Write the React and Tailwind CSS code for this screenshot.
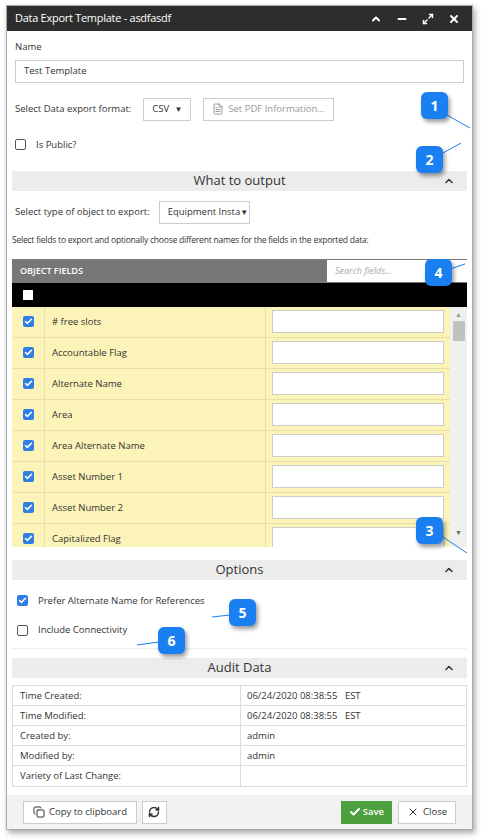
import { ChevronUp, Minus, Maximize2, X, Check, RefreshCw, Copy, FileText } from "lucide-react";

const font = { fontFamily: '"Open Sans", "Liberation Sans", sans-serif' };

const fields = ["# free slots", "Accountable Flag", "Alternate Name", "Area", "Area Alternate Name", "Asset Number 1", "Asset Number 2", "Capitalized Flag"];

const audit = [
  ["Time Created:", "06/24/2020 08:38:55   EST"],
  ["Time Modified:", "06/24/2020 08:38:55   EST"],
  ["Created by:", "admin"],
  ["Modified by:", "admin"],
  ["Variety of Last Change:", ""],
];

const Box = ({ on }) =>
  on ? (
    <span className="inline-flex h-[11px] w-[11px] items-center justify-center rounded-[2px] bg-[#2f7ee6]">
      <Check className="h-[9px] w-[9px] text-white" strokeWidth={4} />
    </span>
  ) : (
    <span className="inline-block h-[11px] w-[11px] rounded-[2px] border border-[#555] bg-white" />
  );

const Section = ({ title }) => (
  <div className="relative flex h-5 items-center justify-center bg-[#ececec] text-[13px] text-[#333]">
    {title}
    <ChevronUp className="absolute right-3 h-3 w-3 text-[#333]" strokeWidth={3} />
  </div>
);

const Badge = ({ n, className }) => (
  <div className={`absolute flex h-[27px] w-[27px] items-center justify-center rounded-md bg-[#1a7ff0] text-[14px] font-bold text-white shadow-[2px_3px_4px_rgba(0,0,0,0.4)] ${className}`}>{n}</div>
);

export default function App() {
  return (
    <div className="relative h-[840px] w-[482px] bg-white text-[9.5px] text-[#333]" style={font}>
      <div className="absolute left-[6px] top-[5px] flex h-[825px] w-[467px] flex-col border border-[#aaa] bg-white shadow-[2px_3px_6px_rgba(0,0,0,0.35)]">
        <div className="flex h-[27px] items-center justify-between bg-[#2d2d2d] px-2 text-white">
          <span className="text-[11px] tracking-tight">Data Export Template - asdfasdf</span>
          <div className="flex items-center gap-[14px] pr-1">
            <ChevronUp className="h-3 w-3" strokeWidth={4} />
            <Minus className="h-3 w-3" strokeWidth={4} />
            <Maximize2 className="h-3 w-3" strokeWidth={3} />
            <X className="h-3 w-3" strokeWidth={4} />
          </div>
        </div>

        <div className="flex-1 px-[5px]">
          <div className="px-[3px] pt-[9px]">
            <div>Name</div>
            <div className="mt-[5px] flex h-[23px] items-center border border-[#ccc] px-2">Test Template</div>
            <div className="mt-[15px] flex items-center">
              <span className="whitespace-nowrap">Select Data export format:</span>
              <div className="ml-[12px] flex h-[23px] w-[48px] items-center justify-between border border-[#ccc] px-2">
                CSV <span className="text-[8px]">▼</span>
              </div>
              <div className="ml-[12px] flex h-[23px] w-[131px] items-center gap-1 whitespace-nowrap border border-[#ccc] px-2 text-[#999]">
                <FileText className="h-3 w-3 shrink-0" /> Set PDF Information...
              </div>
            </div>
            <div className="mt-[17px] flex items-center gap-[10px]">
              <Box /> <span>Is Public?</span>
            </div>
          </div>

          <div className="mt-[19px]"><Section title="What to output" /></div>
          <div className="mt-[10px] flex items-center px-[3px]">
            <span className="whitespace-nowrap">Select type of object to export:</span>
            <div className="ml-[9px] flex h-[23px] w-[91px] items-center justify-between overflow-hidden border border-[#ccc] pl-2 pr-1">
              <span className="whitespace-nowrap">Equipment Insta</span><span className="text-[8px]">▼</span>
            </div>
          </div>
          <div className="mt-[10px] whitespace-nowrap text-[8.5px] tracking-tight">
            Select fields to export and optionally choose different names for the fields in the exported data:
          </div>

          <div className="mt-[12px]">
            <div className="flex h-[24px] items-center justify-between bg-[#777] pl-2">
              <span className="text-[9px] font-semibold text-white">OBJECT FIELDS</span>
              <div className="flex h-[22px] w-[140px] items-center bg-white px-2 text-[9px] italic text-[#aaa]">Search fields...</div>
            </div>
            <div className="flex h-[24px] items-center bg-black pl-[11px]">
              <span className="inline-block h-[10px] w-[10px] bg-white" />
            </div>
            <div className="flex h-[240px] overflow-hidden">
              <div className="flex-1 bg-[#fbf3b8]">
                {fields.map((f) => (
                  <div key={f} className="flex h-[31px] border-b border-[#e6dfa9]">
                    <div className="flex w-[33px] items-center justify-center border-r border-[#e6dfa9]"><Box on /></div>
                    <div className="flex w-[221px] items-center border-r border-[#e6dfa9] pl-[7px]">{f}</div>
                    <div className="flex flex-1 items-center px-[6px]"><div className="h-[23px] w-full border border-[#ccc] bg-white" /></div>
                  </div>
                ))}
              </div>
              <div className="flex w-[17px] flex-col items-center bg-[#f0f0f0]">
                <span className="mt-[3px] text-[7px] text-[#999]">▲</span>
                <div className="mt-[1px] h-[20px] w-[12px] bg-[#c1c1c1]" />
                <div className="flex-1" />
                <span className="mb-[8px] text-[7px] text-[#666]">▼</span>
              </div>
            </div>
          </div>

          <div className="mt-[13px]"><Section title="Options" /></div>
          <div className="px-[5px] pt-[14px]">
            <div className="flex items-center gap-[10px]"><Box on /> <span>Prefer Alternate Name for References</span></div>
            <div className="mt-[15px] flex items-center gap-[10px]"><Box /> <span>Include Connectivity</span></div>
          </div>
          <div className="mt-[11px] border-t border-[#eee]" />

          <div className="mt-[9px]"><Section title="Audit Data" /></div>
          <div className="mt-[7px] border border-[#ddd]">
            {audit.map(([k, v]) => (
              <div key={k} className="flex h-[20px] border-b border-[#ddd] last:border-b-0">
                <div className="flex w-[228px] items-center border-r border-[#ddd] pl-[7px]">{k}</div>
                <div className="flex flex-1 items-center whitespace-pre pl-[6px]">{v}</div>
              </div>
            ))}
          </div>
        </div>

        <div className="mt-[8px] flex h-[36px] items-center justify-between bg-[#f2f2f2] px-[16px]">
          <div className="flex gap-[5px]">
            <div className="flex h-[23px] items-center gap-1 border border-[#ccc] bg-white px-[9px]"><Copy className="h-3 w-3" /> Copy to clipboard</div>
            <div className="flex h-[23px] w-[25px] items-center justify-center border border-[#ccc] bg-white"><RefreshCw className="h-3 w-3" strokeWidth={3} /></div>
          </div>
          <div className="flex gap-[6px]">
            <div className="flex h-[23px] items-center gap-[2px] bg-[#4ea03e] px-[8px] font-semibold text-white"><Check className="h-3 w-3" strokeWidth={4} /> Save</div>
            <div className="flex h-[23px] items-center gap-1 border border-[#ccc] bg-white px-[8px]"><X className="h-3 w-3" /> Close</div>
          </div>
        </div>
      </div>

      <svg className="pointer-events-none absolute left-0 top-0" width="482" height="840">
        <g stroke="#1a7ff0" strokeWidth="1">
          <line x1="447" y1="115" x2="470" y2="128" />
          <line x1="443" y1="153" x2="461" y2="143" />
          <line x1="443" y1="537" x2="467" y2="553" />
          <line x1="450" y1="269" x2="465" y2="264" />
          <line x1="230" y1="615" x2="212" y2="617" />
          <line x1="159" y1="642" x2="137" y2="645" />
        </g>
      </svg>
      <Badge n="1" className="left-[421px] top-[92px]" />
      <Badge n="2" className="left-[416px] top-[146px]" />
      <Badge n="3" className="left-[416px] top-[517px]" />
      <Badge n="4" className="left-[425px] top-[259px]" />
      <Badge n="5" className="left-[229px] top-[599px]" />
      <Badge n="6" className="left-[158px] top-[627px]" />
    </div>
  );
}
